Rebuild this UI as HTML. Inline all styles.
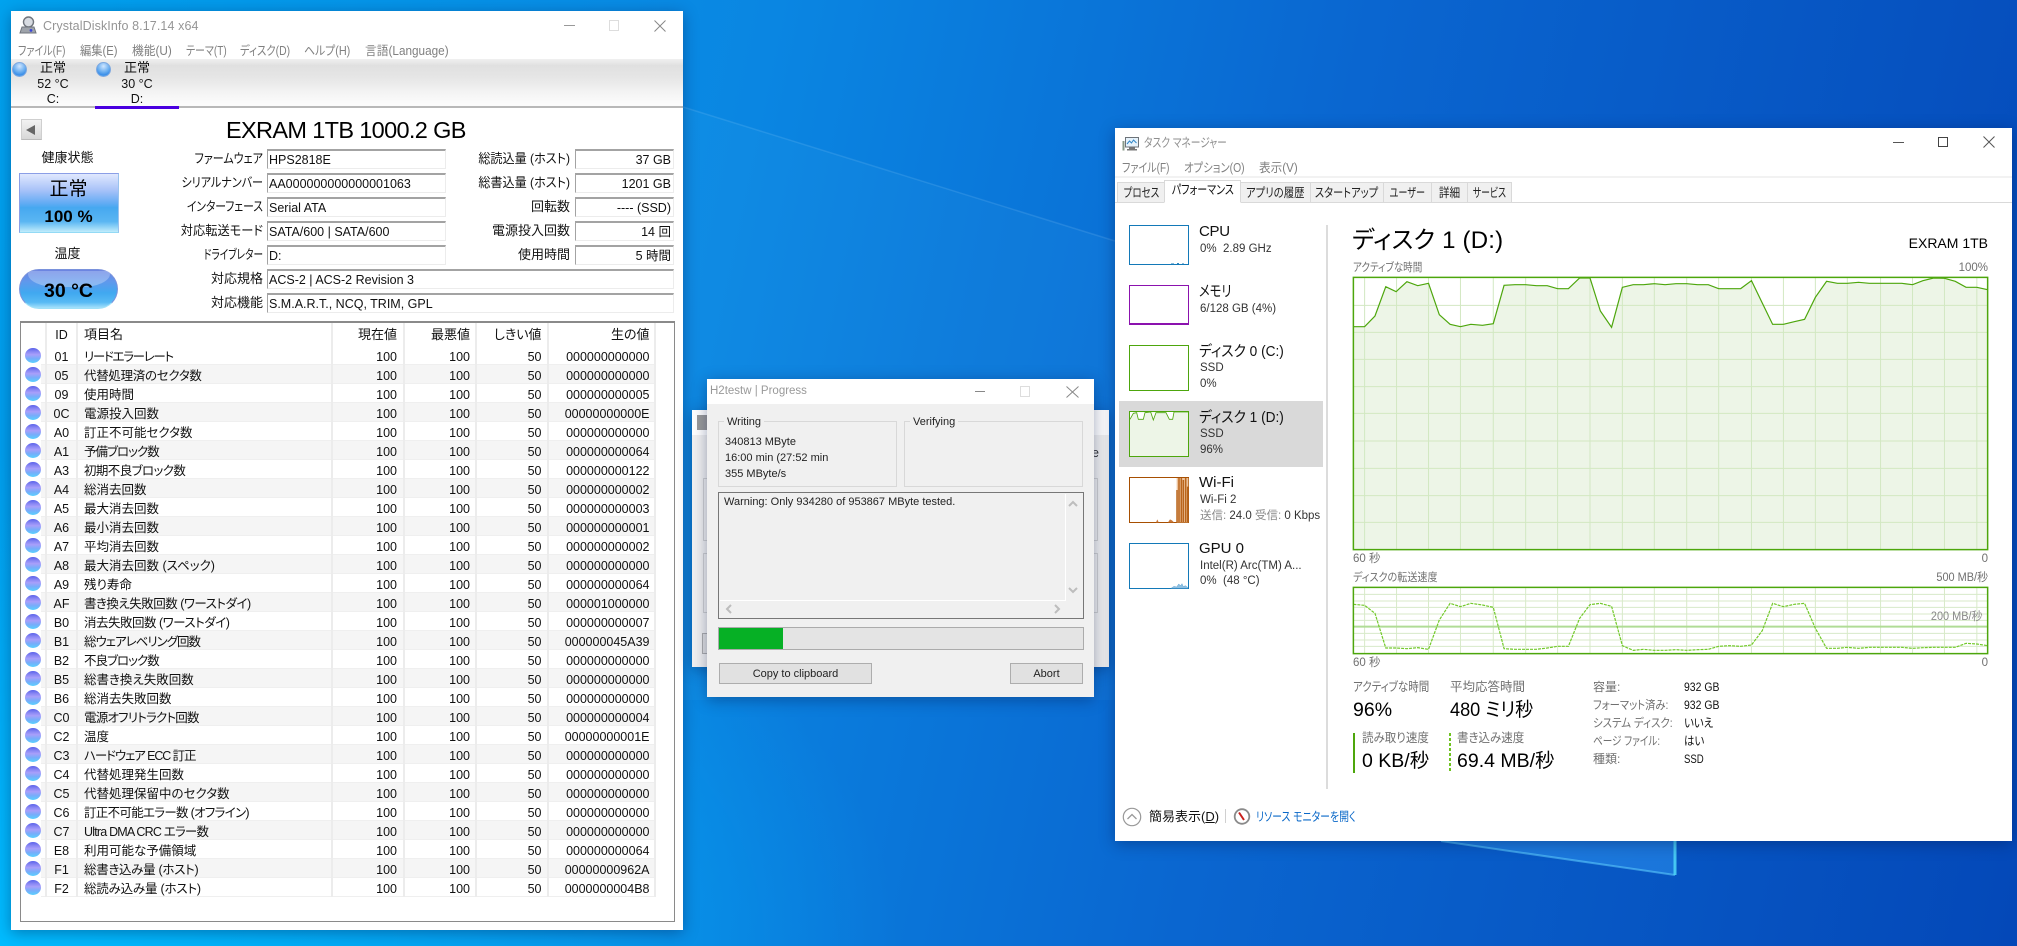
<!DOCTYPE html>
<html lang="ja"><head><meta charset="utf-8"><title>Disk test</title>
<style>
*{box-sizing:border-box}
html,body{margin:0;padding:0}
body{position:relative;width:2017px;height:946px;overflow:hidden;font-family:"Liberation Sans","Noto Sans CJK JP",sans-serif;font-feature-settings:"palt";font-size:12.5px;color:#111;
background:radial-gradient(ellipse 900px 500px at 0% 100%,#00bcff 0%,rgba(0,180,255,0) 100%),linear-gradient(102deg,#00a2ee 0%,#0a86e2 35%,#0a66d0 62%,#0448b8 100%)}
.a{position:absolute}
.t{position:absolute;white-space:nowrap;line-height:20px;height:20px;transform-origin:0 50%}
.w{position:absolute;background:#fff;box-shadow:0 3px 14px rgba(0,20,70,.38)}
.g{color:#707070}
.m{color:#808080}
.ra{text-align:right;transform-origin:100% 50%}
.f{position:absolute;height:20px;background:#fff;border-top:2px solid #a3a3a3;border-left:1px solid #a3a3a3;border-right:1px solid #ececec;border-bottom:1px solid #ececec;line-height:18px;padding-left:1px;white-space:nowrap;font-size:12.5px;color:#111}
.f.x{text-align:right;padding:0 2px 0 0}
.l{position:absolute;text-align:right;white-space:nowrap;line-height:20px;height:20px;font-size:13px;transform-origin:100% 50%}
.rows{position:absolute;left:0;top:346px;width:700px}
.r{position:relative;height:19px;line-height:22px;font-size:12.5px;color:#111}
.r:nth-child(even)::before{content:"";position:absolute;left:41px;width:614px;top:0;height:19px;background:#f5f5f5}
.r::after{content:"";position:absolute;left:41px;width:614px;bottom:0;height:1px;background:#efefef}
.r span{position:absolute;top:0;white-space:nowrap}
.r span:nth-child(1){left:25px;top:2px;width:16px;height:15px;border-radius:50%;background:linear-gradient(180deg,#5a62ea 0%,#8a88f4 25%,#a8a0fa 45%,#78acfa 70%,#58d0ff 100%)}
.r span:nth-child(2){left:46px;width:31px;text-align:center}
.r span:nth-child(3){left:84px}
.r span:nth-child(4){left:331px;width:66px;text-align:right}
.r span:nth-child(5){left:403px;width:67px;text-align:right}
.r span:nth-child(6){left:475px;width:66.5px;text-align:right}
.r span:nth-child(7){left:547px;width:102.5px;text-align:right}
.v{position:absolute;top:323px;height:574px;width:2px;background:#ececec}
.tab{position:absolute;top:182px;height:21px;background:#f0f0f0;border:1px solid #d9d9d9;display:flex;justify-content:center;line-height:20px;font-size:12.5px;color:#222;white-space:nowrap}
.tab span{display:inline-block;flex:none}
.th{position:absolute;left:1129px;width:60px;background:#fff;border:1.5px solid}
.h{font-size:15px}
.s{font-size:11.5px;color:#333}
</style></head><body>

<!-- wallpaper beams -->
<svg class="a" style="left:0;top:0" width="2017" height="946" viewBox="0 0 2017 946">
<polygon points="683,107 1115,241 1115,700 683,700" fill="#7fd0ff" opacity=".05"/>
<polyline points="683,107 1115,241" fill="none" stroke="#b8e6ff" stroke-width="1.500" opacity=".14"/>
<polygon points="1441,841 1675,841 1675,875" fill="#3aa8ff" opacity=".4"/>
<polyline points="1441,841 1675,875" fill="none" stroke="#62d2ff" stroke-width="2" opacity=".55"/>
<polyline points="1675,841 1675,875" fill="none" stroke="#4fd8f8" stroke-width="3" opacity=".85"/>
</svg>

<!-- CrystalDiskInfo -->
<div class="w" style="left:11px;top:11px;width:672px;height:919px"></div>
<svg class="a" style="left:19px;top:16px" width="18" height="18" viewBox="0 0 18 18"><ellipse cx="9.5" cy="6" rx="5" ry="5" fill="#d8dce2" stroke="#70757d" stroke-width="1.4"/><path d="M3 11L15 11 17 17H1Z" fill="#9ea3aa" stroke="#70757d"/><circle cx="12" cy="14.4" r="1.4" fill="#3a46d8"/></svg>
<div class="t" style="left:43px;top:16px;font-size:12.5px;color:#959595;width:150px;letter-spacing:.1px">CrystalDiskInfo 8.17.14 x64</div>
<div class="a" style="left:564px;top:25px;width:11px;height:1px;background:#999"></div>
<div class="a" style="left:609px;top:20px;width:10px;height:11px;border:1px solid #ddd"></div>
<svg class="a" style="left:654px;top:20px" width="12" height="12"><path d="M.5.5L11.5 11.500M11.500.5L.5 11.500" stroke="#888" fill="none"/></svg>
<div class="t m" style="left:18px;top:41px;transform:scaleX(.8)">ファイル(F)</div>
<div class="t m" style="left:80px;top:41px;transform:scaleX(.9)">編集(E)</div>
<div class="t m" style="left:132px;top:41px;transform:scaleX(.94)">機能(U)</div>
<div class="t m" style="left:186px;top:41px;transform:scaleX(.8)">テーマ(T)</div>
<div class="t m" style="left:240px;top:41px;transform:scaleX(.83)">ディスク(D)</div>
<div class="t m" style="left:304px;top:41px;transform:scaleX(.87)">ヘルプ(H)</div>
<div class="t m" style="left:365px;top:41px;transform:scaleX(.94)">言語(Language)</div>
<div class="a" style="left:11px;top:59px;width:672px;height:49px;background:linear-gradient(180deg,#f0f0f0 0%,#e0e0e0 14%,#e6e6e6 40%,#f5f5f5 75%,#fbfbfb 96%);border-bottom:2px solid #b8b8b8"></div>
<div class="a" style="left:95px;top:106px;width:84px;height:3px;background:#4a00e0"></div>
<div class="a" style="left:12px;top:62px;width:15px;height:15px;border-radius:50%;background:radial-gradient(circle at 50% 25%,#d0e6ff 0%,#6aaef0 50%,#3a8ee8 75%,#8fd8ff 100%);border:1px solid #7ea8e0"></div>
<div class="a" style="left:96px;top:62px;width:15px;height:15px;border-radius:50%;background:radial-gradient(circle at 50% 25%,#d0e6ff 0%,#6aaef0 50%,#3a8ee8 75%,#8fd8ff 100%);border:1px solid #7ea8e0"></div>
<div class="t" style="left:28px;top:58px;width:50px;text-align:center;font-size:13px">正常</div>
<div class="t" style="left:28px;top:74px;width:50px;text-align:center;font-size:12.5px">52 °C</div>
<div class="t" style="left:28px;top:89px;width:50px;text-align:center;font-size:12.5px">C:</div>
<div class="t" style="left:112px;top:58px;width:50px;text-align:center;font-size:13px">正常</div>
<div class="t" style="left:112px;top:74px;width:50px;text-align:center;font-size:12.5px">30 °C</div>
<div class="t" style="left:112px;top:89px;width:50px;text-align:center;font-size:12.5px">D:</div>

<div class="a" style="left:21px;top:119px;width:21px;height:21px;background:linear-gradient(180deg,#f2f2f2,#d8d8d8);border:1px solid #cfcfcf;border-bottom-color:#bbb"></div>
<div class="a" style="left:26px;top:125px;width:0;height:0;border-top:5px solid transparent;border-bottom:5px solid transparent;border-right:9px solid #666"></div>
<div class="t" style="left:226px;top:115px;height:30px;line-height:30px;font-size:23.5px;color:#000;letter-spacing:-.65px">EXRAM 1TB 1000.2 GB</div>

<div class="t" style="left:19px;top:148px;width:97px;text-align:center;font-size:13px">健康状態</div>
<div class="a" style="left:19px;top:173px;width:100px;height:60px;border:1px solid #8b9ee6;border-bottom-color:#93daf5;border-right-color:#9ac2ee;background:linear-gradient(180deg,#e0e8fe 0%,#a8c2f8 28%,#64acf4 50%,#46a8f0 58%,#5ab6f2 82%,#c0ecfb 100%)"></div>
<div class="t" style="left:20px;top:180px;width:97px;text-align:center;font-size:19px;color:#000">正常</div>
<div class="t" style="left:19px;top:207px;width:99px;text-align:center;font-size:17px;font-weight:bold;color:#000">100 %</div>
<div class="t" style="left:19px;top:244px;width:97px;text-align:center;font-size:13px">温度</div>
<div class="a" style="left:19px;top:269px;width:99px;height:40px;border-radius:20px;background:linear-gradient(180deg,#6d84e0 0%,#6098ec 30%,#40a8f0 60%,#58baf4 85%,#a6e2fb 100%);border:1px solid #7a92dc;border-bottom-color:#a0e0f8"></div>
<div class="a" style="left:28px;top:271px;width:82px;height:16px;border-radius:4px 4px 30px 30px/3px 3px 14px 14px;background:linear-gradient(180deg,#a8bcf2,#b6d6f8);opacity:.55"></div>
<div class="t" style="left:19px;top:281px;width:99px;text-align:center;font-size:19.5px;font-weight:bold;color:#000">30 °C</div>

<div class="l" style="left:143px;width:120px;top:149px;transform:scaleX(.85)">ファームウェア</div>
<div class="l" style="left:143px;width:120px;top:173px;transform:scaleX(.85)">シリアルナンバー</div>
<div class="l" style="left:143px;width:120px;top:197px;transform:scaleX(.83)">インターフェース</div>
<div class="l" style="left:143px;width:120px;top:221px;transform:scaleX(.94)">対応転送モード</div>
<div class="l" style="left:143px;width:120px;top:245px;transform:scaleX(.74)">ドライブレター</div>
<div class="l" style="left:143px;width:120px;top:269px">対応規格</div>
<div class="l" style="left:143px;width:120px;top:293px">対応機能</div>
<div class="f" style="left:267px;top:149px;width:179px">HPS2818E</div>
<div class="f" style="left:267px;top:173px;width:179px">AA000000000000001063</div>
<div class="f" style="left:267px;top:197px;width:179px">Serial ATA</div>
<div class="f" style="left:267px;top:221px;width:179px">SATA/600 | SATA/600</div>
<div class="f" style="left:267px;top:245px;width:179px">D:</div>
<div class="f" style="left:267px;top:269px;width:407px">ACS-2 | ACS-2 Revision 3</div>
<div class="f" style="left:267px;top:293px;width:407px">S.M.A.R.T., NCQ, TRIM, GPL</div>
<div class="l" style="left:450px;width:120px;top:149px;transform:scaleX(.93)">総読込量 (ホスト)</div>
<div class="l" style="left:450px;width:120px;top:173px;transform:scaleX(.93)">総書込量 (ホスト)</div>
<div class="l" style="left:450px;width:120px;top:197px">回転数</div>
<div class="l" style="left:450px;width:120px;top:221px">電源投入回数</div>
<div class="l" style="left:450px;width:120px;top:245px">使用時間</div>
<div class="f x" style="left:575px;top:149px;width:99px">37 GB</div>
<div class="f x" style="left:575px;top:173px;width:99px">1201 GB</div>
<div class="f x" style="left:575px;top:197px;width:99px">---- (SSD)</div>
<div class="f x" style="left:575px;top:221px;width:99px">14 回</div>
<div class="f x" style="left:575px;top:245px;width:99px">5 時間</div>

<div class="a" style="left:20px;top:321px;width:655px;height:601px;background:#fff;border:1px solid #8a8a8a;border-top-width:2px"></div>
<div class="t" style="left:46px;top:325px;width:31px;text-align:center">ID</div>
<div class="t" style="left:84px;top:325px;font-size:13px">項目名</div>
<div class="t ra" style="left:331px;top:325px;width:66px;font-size:13px">現在値</div>
<div class="t ra" style="left:403px;top:325px;width:67px;font-size:13px">最悪値</div>
<div class="t ra" style="left:475px;top:325px;width:66.500px;font-size:13px">しきい値</div>
<div class="t ra" style="left:547px;top:325px;width:102.500px;font-size:13px">生の値</div>

<div class="rows">
<div class="r"><span></span><span>01</span><span style="letter-spacing:-1.3px">リードエラーレート</span><span>100</span><span>100</span><span>50</span><span>000000000000</span></div>
<div class="r"><span></span><span>05</span><span style="letter-spacing:-.3px">代替処理済のセクタ数</span><span>100</span><span>100</span><span>50</span><span>000000000000</span></div>
<div class="r"><span></span><span>09</span><span>使用時間</span><span>100</span><span>100</span><span>50</span><span>000000000005</span></div>
<div class="r"><span></span><span>0C</span><span>電源投入回数</span><span>100</span><span>100</span><span>50</span><span>00000000000E</span></div>
<div class="r"><span></span><span>A0</span><span>訂正不可能セクタ数</span><span>100</span><span>100</span><span>50</span><span>000000000000</span></div>
<div class="r"><span></span><span>A1</span><span style="letter-spacing:-1px">予備ブロック数</span><span>100</span><span>100</span><span>50</span><span>000000000064</span></div>
<div class="r"><span></span><span>A3</span><span style="letter-spacing:-.6px">初期不良ブロック数</span><span>100</span><span>100</span><span>50</span><span>000000000122</span></div>
<div class="r"><span></span><span>A4</span><span>総消去回数</span><span>100</span><span>100</span><span>50</span><span>000000000002</span></div>
<div class="r"><span></span><span>A5</span><span>最大消去回数</span><span>100</span><span>100</span><span>50</span><span>000000000003</span></div>
<div class="r"><span></span><span>A6</span><span>最小消去回数</span><span>100</span><span>100</span><span>50</span><span>000000000001</span></div>
<div class="r"><span></span><span>A7</span><span>平均消去回数</span><span>100</span><span>100</span><span>50</span><span>000000000002</span></div>
<div class="r"><span></span><span>A8</span><span>最大消去回数 (スペック)</span><span>100</span><span>100</span><span>50</span><span>000000000000</span></div>
<div class="r"><span></span><span>A9</span><span>残り寿命</span><span>100</span><span>100</span><span>50</span><span>000000000064</span></div>
<div class="r"><span></span><span>AF</span><span style="letter-spacing:-.5px">書き換え失敗回数 (ワーストダイ)</span><span>100</span><span>100</span><span>50</span><span>000001000000</span></div>
<div class="r"><span></span><span>B0</span><span style="letter-spacing:-.5px">消去失敗回数 (ワーストダイ)</span><span>100</span><span>100</span><span>50</span><span>000000000007</span></div>
<div class="r"><span></span><span>B1</span><span style="letter-spacing:-1px">総ウェアレベリング回数</span><span>100</span><span>100</span><span>50</span><span>000000045A39</span></div>
<div class="r"><span></span><span>B2</span><span style="letter-spacing:-1px">不良ブロック数</span><span>100</span><span>100</span><span>50</span><span>000000000000</span></div>
<div class="r"><span></span><span>B5</span><span>総書き換え失敗回数</span><span>100</span><span>100</span><span>50</span><span>000000000000</span></div>
<div class="r"><span></span><span>B6</span><span>総消去失敗回数</span><span>100</span><span>100</span><span>50</span><span>000000000000</span></div>
<div class="r"><span></span><span>C0</span><span style="letter-spacing:-.8px">電源オフリトラクト回数</span><span>100</span><span>100</span><span>50</span><span>000000000004</span></div>
<div class="r"><span></span><span>C2</span><span>温度</span><span>100</span><span>100</span><span>50</span><span>00000000001E</span></div>
<div class="r"><span></span><span>C3</span><span style="letter-spacing:-1.1px">ハードウェア ECC 訂正</span><span>100</span><span>100</span><span>50</span><span>000000000000</span></div>
<div class="r"><span></span><span>C4</span><span>代替処理発生回数</span><span>100</span><span>100</span><span>50</span><span>000000000000</span></div>
<div class="r"><span></span><span>C5</span><span>代替処理保留中のセクタ数</span><span>100</span><span>100</span><span>50</span><span>000000000000</span></div>
<div class="r"><span></span><span>C6</span><span style="letter-spacing:-.7px">訂正不可能エラー数 (オフライン)</span><span>100</span><span>100</span><span>50</span><span>000000000000</span></div>
<div class="r"><span></span><span>C7</span><span style="letter-spacing:-.8px">Ultra DMA CRC エラー数</span><span>100</span><span>100</span><span>50</span><span>000000000000</span></div>
<div class="r"><span></span><span>E8</span><span>利用可能な予備領域</span><span>100</span><span>100</span><span>50</span><span>000000000064</span></div>
<div class="r"><span></span><span>F1</span><span style="letter-spacing:-.3px">総書き込み量 (ホスト)</span><span>100</span><span>100</span><span>50</span><span>00000000962A</span></div>
<div class="r"><span></span><span>F2</span><span style="letter-spacing:-.2px">総読み込み量 (ホスト)</span><span>100</span><span>100</span><span>50</span><span>0000000004B8</span></div>
</div>
<div class="v" style="left:45px"></div><div class="v" style="left:76px"></div><div class="v" style="left:331px"></div><div class="v" style="left:403px"></div><div class="v" style="left:475px"></div><div class="v" style="left:547px"></div><div class="v" style="left:654px"></div>

<!-- H2testw back window -->
<div class="w" style="left:692px;top:410px;width:417px;height:257px;background:#f0f0f0"></div>
<div class="a" style="left:692px;top:410px;width:417px;height:25px;background:#fff"></div>
<div class="a" style="left:697px;top:415px;width:10px;height:15px;background:#9a9a9a"></div>
<div class="a" style="left:703px;top:478px;width:395px;height:63px;border:1px solid #d0d0d0"></div>
<div class="a" style="left:703px;top:553px;width:395px;height:60px;border:1px solid #d0d0d0"></div>
<div class="a" style="left:702px;top:633px;width:20px;height:21px;background:#e1e1e1;border:1px solid #adadad"></div>
<div class="t" style="left:1092px;top:443px;color:#333">e</div>

<!-- H2testw progress -->
<div class="w" style="left:707px;top:379px;width:387px;height:318px;background:#f0f0f0"></div>
<div class="a" style="left:707px;top:379px;width:387px;height:25px;background:#fff"></div>
<div class="t" style="left:710px;top:381px;font-size:11.500px;color:#999">H2testw | Progress</div>
<div class="a" style="left:975px;top:391px;width:10px;height:1px;background:#888"></div>
<div class="a" style="left:1020px;top:386px;width:10px;height:11px;border:1px solid #ddd"></div>
<svg class="a" style="left:1066px;top:386px" width="13" height="12"><path d="M.5.5L12.500 11.500M12.500.5L.5 11.500" stroke="#888" fill="none"/></svg>
<div class="a" style="left:718px;top:421px;width:179px;height:66px;border:1.5px solid #d8d8d8"></div>
<div class="a" style="left:904px;top:421px;width:179px;height:66px;border:1.5px solid #d8d8d8"></div>
<div class="t" style="left:724px;top:412px;font-size:11px;background:#f0f0f0;padding:0 3px;color:#222">Writing</div>
<div class="t" style="left:910px;top:412px;font-size:11px;background:#f0f0f0;padding:0 3px;color:#222">Verifying</div>
<div class="t" style="left:725px;top:432px;font-size:11px;color:#222">340813 MByte</div>
<div class="t" style="left:725px;top:448px;font-size:11px;color:#222">16:00 min (27:52 min</div>
<div class="t" style="left:725px;top:464px;font-size:11px;color:#222">355 MByte/s</div>
<div class="a" style="left:718px;top:492px;width:366px;height:127px;border:1.5px solid #777"></div>
<div class="a" style="left:1065px;top:494px;width:1px;height:107px;background:#fff"></div>
<div class="a" style="left:720px;top:600px;width:346px;height:1px;background:#fff"></div>
<div class="t" style="left:724px;top:492px;font-size:11px;color:#222">Warning: Only 934280 of 953867 MByte tested.</div>
<svg class="a" style="left:718px;top:492px" width="366" height="127" fill="none" stroke="#bdbdbd" stroke-width="2"><path d="M351 14l4-4 4 4M351 96l4 4 4-4M13 113l-4 4 4 4M337 113l4 4-4 4"/></svg>
<div class="a" style="left:718px;top:627px;width:366px;height:23px;background:#e4e4e4;border:1px solid #ababab"></div>
<div class="a" style="left:719px;top:628px;width:64px;height:21px;background:#06b025"></div>
<div class="a" style="left:719px;top:663px;width:153px;height:21px;background:#e1e1e1;border:1px solid #adadad;text-align:center;line-height:20px;font-size:11px;color:#222">Copy to clipboard</div>
<div class="a" style="left:1010px;top:663px;width:73px;height:21px;background:#e1e1e1;border:1px solid #adadad;text-align:center;line-height:20px;font-size:11px;color:#222">Abort</div>

<!-- Task Manager -->
<div class="w" style="left:1115px;top:128px;width:897px;height:713px"></div>
<svg class="a" style="left:1122px;top:136px" width="18" height="16" viewBox="0 0 18 16"><rect x="3.500" y="1.500" width="13" height="9.500" fill="#e6f2fb" stroke="#6d7379"/><path d="M5 8l2.500-3 2 2 2-3 3 3" fill="none" stroke="#2f86c8"/><rect x="7" y="11.500" width="6" height="1.500" fill="#777"/><rect x="5" y="13" width="10" height="1.500" fill="#777"/><rect x=".5" y="5" width="2" height="9.500" fill="#8a9a8a"/></svg>
<div class="t" style="left:1144px;top:133px;color:#8f8f8f;font-size:12.500px;transform:scaleX(.78)">タスク マネージャー</div>
<div class="a" style="left:1893px;top:142px;width:11px;height:1px;background:#555"></div>
<div class="a" style="left:1938px;top:137px;width:10px;height:10px;border:1px solid #444"></div>
<svg class="a" style="left:1983px;top:136px" width="12" height="12"><path d="M.5.5L11.500 11.500M11.500.5L.5 11.500" stroke="#555" fill="none"/></svg>
<div class="t m" style="left:1122px;top:158px;font-size:12.500px;transform:scaleX(.8)">ファイル(F)</div>
<div class="t m" style="left:1184px;top:158px;font-size:12.500px;transform:scaleX(.83)">オプション(O)</div>
<div class="t m" style="left:1259px;top:158px;font-size:12.500px;transform:scaleX(.93)">表示(V)</div>
<div class="a" style="left:1115px;top:176px;width:897px;height:2px;background:#f2f2f2"></div>
<div class="a" style="left:1115px;top:202px;width:897px;height:1px;background:#d9d9d9"></div>
<div class="tab" style="left:1117px;width:48px"><span style="transform:scaleX(.76)">プロセス</span></div>
<div class="tab" style="left:1240px;width:71px"><span style="transform:scaleX(.83)">アプリの履歴</span></div>
<div class="tab" style="left:1310px;width:74px"><span style="transform:scaleX(.82)">スタートアップ</span></div>
<div class="tab" style="left:1383px;width:49px"><span style="transform:scaleX(.73)">ユーザー</span></div>
<div class="tab" style="left:1431px;width:37px"><span style="transform:scaleX(.85)">詳細</span></div>
<div class="tab" style="left:1467px;width:45px"><span style="transform:scaleX(.71)">サービス</span></div>
<div class="tab" style="left:1164px;top:180px;width:77px;height:23px;background:#fff;border-bottom-color:#fff;line-height:18px;color:#111"><span style="transform:scaleX(.8)">パフォーマンス</span></div>

<div class="a" style="left:1119px;top:401px;width:204px;height:66px;background:#d9d9d9"></div>
<div class="a" style="left:1326px;top:225px;width:1.500px;height:564px;background:#dcdcdc"></div>
<div class="th" style="top:225px;height:40px;border-color:#1379b8"></div>
<div class="th" style="top:285px;height:40px;border-color:#8b12ae;border-bottom-width:2.500px"></div>
<div class="th" style="top:345px;height:46px;border-color:#4da60c"></div>
<div class="th" style="top:411px;height:46px;border-color:#4da60c;background:#edf5e7"></div>
<div class="th" style="top:477px;height:46px;border-color:#a74f01"></div>
<div class="th" style="top:543px;height:46px;border-color:#1379b8"></div>
<svg class="a" style="left:1110px;top:120px" width="460" height="150" viewBox="0 0 1380 450"><path d="M183 432h9M201 431h6M216 432h6" stroke="#1379b8" stroke-width="3" fill="none"/></svg>
<svg class="a" style="left:1110px;top:400px" width="460" height="200" viewBox="0 0 1380 600">
<path d="M60 36H70L60 60ZM70 38 80 36 85 58 100 58 105 36 122 36 130 60 138 38ZM168 36 178 58 188 58 192 36Z" fill="#fff"/>
<path d="M60 58L70 40 80 38 85 58 100 58 105 38 122 36 130 60 138 38 168 38 178 58 188 58 192 36H236" stroke="#4da60c" stroke-width="2.500" fill="none"/>
<rect x="200" y="234" width="35" height="133" fill="#ecc29b"/>
<path d="M201 366V270M207 366V234M214 366V234M220 366V240M227 366V234M233 366V260" stroke="#b9651c" stroke-width="4.500" fill="none"/>
<path d="M138 367l4-9 4 9zM174 367l6-9 6 3 6 6z" fill="#c97a3d"/>
<path d="M184 564l8-5 8 2 6-9 6 5 4-6 4 9 6-3 8 6v2h-50z" fill="#8fc0e2" stroke="#3a8cc5"/>
</svg>
<div class="t h" style="left:1199px;top:222px;letter-spacing:-.3px">CPU</div>
<div class="t s" style="left:1200px;top:239px">0%&nbsp; 2.89 GHz</div>
<div class="t h" style="left:1199px;top:282px;transform:scaleX(.82)">メモリ</div>
<div class="t s" style="left:1200px;top:299px">6/128 GB (4%)</div>
<div class="t h" style="left:1199px;top:342px;transform:scaleX(.91)">ディスク 0 (C:)</div>
<div class="t s" style="left:1200px;top:358px">SSD</div>
<div class="t s" style="left:1200px;top:374px">0%</div>
<div class="t h" style="left:1199px;top:408px;transform:scaleX(.91)">ディスク 1 (D:)</div>
<div class="t s" style="left:1200px;top:424px">SSD</div>
<div class="t s" style="left:1200px;top:440px">96%</div>
<div class="t h" style="left:1199px;top:473px">Wi-Fi</div>
<div class="t s" style="left:1200px;top:490px">Wi-Fi 2</div>
<div class="t s" style="left:1200px;top:506px"><span style="color:#8a8a8a">送信:</span> 24.0 <span style="color:#8a8a8a">受信:</span> 0 Kbps</div>
<div class="t h" style="left:1199px;top:539px">GPU 0</div>
<div class="t s" style="left:1200px;top:556px">Intel(R) Arc(TM) A...</div>
<div class="t s" style="left:1200px;top:571px">0%&nbsp; (48 °C)</div>

<div class="t" style="left:1352px;top:226px;height:30px;line-height:30px;font-size:24px;color:#000;letter-spacing:.2px">ディスク 1 (D:)</div>
<div class="t ra" style="left:1850px;top:233px;width:138px;font-size:14px;color:#000">EXRAM 1TB</div>
<div class="t g" style="left:1353px;top:258px;font-size:11.500px;transform:scaleX(.83)">アクティブな時間</div>
<div class="t g ra" style="left:1900px;top:258px;width:88px;font-size:11.500px">100%</div>

<svg class="a" style="left:1340px;top:210px" width="677" height="370" viewBox="0 0 1568 1110" preserveAspectRatio="none">
<rect x="31" y="202" width="1469" height="817" fill="#fff"/>
<polygon fill="#edf5e7" points="31,350 57,350 81,318 106,230 130,245 155,215 180,227 205,220 230,314 255,343 279,350 303,343 330,346 355,341 380,226 405,224 430,224 455,227 480,227 504,236 529,236 555,204 579,204 603,303 629,352 654,232 679,224 703,224 728,221 753,224 778,221 803,221 828,224 853,224 877,236 903,236 928,236 953,212 978,279 1002,343 1027,343 1052,335 1076,328 1101,262 1127,214 1152,220 1175,220 1201,217 1226,220 1252,220 1277,220 1301,220 1326,224 1350,212 1375,204 1400,205 1425,214 1450,232 1475,232 1500,239 1500,1019 31,1019"/>
<path vector-effect="non-scaling-stroke" stroke="#d2e8c2" stroke-width="1" fill="none" d="M57 202V1019M131 202V1019M205 202V1019M279 202V1019M355 202V1019M430 202V1019M504 202V1019M579 202V1019M654 202V1019M728 202V1019M803 202V1019M877 202V1019M953 202V1019M1027 202V1019M1101 202V1019M1175 202V1019M1252 202V1019M1326 202V1019M1400 202V1019M1475 202V1019M31 286H1500M31 367H1500M31 448H1500M31 530H1500M31 610H1500M31 693H1500M31 775H1500M31 857H1500M31 937H1500"/>
<polyline vector-effect="non-scaling-stroke" stroke="#4da60c" stroke-width="1.200" fill="none" points="31,350 57,350 81,318 106,230 130,245 155,215 180,227 205,220 230,314 255,343 279,350 303,343 330,346 355,341 380,226 405,224 430,224 455,227 480,227 504,236 529,236 555,204 579,204 603,303 629,352 654,232 679,224 703,224 728,221 753,224 778,221 803,221 828,224 853,224 877,236 903,236 928,236 953,212 978,279 1002,343 1027,343 1052,335 1076,328 1101,262 1127,214 1152,220 1175,220 1201,217 1226,220 1252,220 1277,220 1301,220 1326,224 1350,212 1375,204 1400,205 1425,214 1450,232 1475,232 1500,239"/>
<rect vector-effect="non-scaling-stroke" x="31" y="202" width="1469" height="817" fill="none" stroke="#4da60c" stroke-width="1.500"/>
</svg>
<div class="t g" style="left:1353px;top:549px;font-size:11.500px">60 秒</div>
<div class="t g ra" style="left:1900px;top:549px;width:88px;font-size:11.500px">0</div>
<div class="t g" style="left:1353px;top:568px;font-size:11.500px;transform:scaleX(.875)">ディスクの転送速度</div>
<div class="t g ra" style="left:1880px;top:568px;width:108px;font-size:11.500px;transform:scaleX(.95)">500 MB/秒</div>

<svg class="a" style="left:1340px;top:560px" width="677" height="300" viewBox="0 0 1568 900" preserveAspectRatio="none">
<rect x="31" y="82" width="1469" height="199" fill="#fff"/>
<path vector-effect="non-scaling-stroke" stroke="#d8eac9" stroke-width="1" fill="none" d="M57 82V281M131 82V281M205 82V281M279 82V281M355 82V281M430 82V281M504 82V281M579 82V281M654 82V281M728 82V281M803 82V281M877 82V281M953 82V281M1027 82V281M1101 82V281M1175 82V281M1252 82V281M1326 82V281M1400 82V281M1475 82V281M31 103H1500M31 123H1500M31 142H1500M31 162H1500M31 181H1500M31 220H1500M31 240H1500M31 259H1500"/>
<path vector-effect="non-scaling-stroke" stroke="#b0dc96" stroke-width="2" fill="none" d="M31 200H1500"/>
<polyline vector-effect="non-scaling-stroke" stroke="#72c92a" stroke-width="1.200" stroke-dasharray="3 1" fill="none" points="31,133 57,136 81,160 106,264 130,264 155,266 180,263 205,268 230,180 255,130 279,140 303,130 330,135 355,142 380,266 405,268 430,268 455,268 480,264 504,259 529,259 555,175 579,134 603,130 629,139 654,257 679,271 703,268 728,271 753,271 778,269 803,271 828,269 853,268 877,259 903,257 928,259 953,255 978,212 1002,130 1027,140 1052,133 1076,130 1101,205 1127,265 1152,265 1175,262 1201,265 1226,262 1252,262 1277,262 1301,262 1326,265 1350,263 1375,262 1400,262 1425,262 1450,250 1475,252 1500,257"/>
<rect vector-effect="non-scaling-stroke" x="31" y="82" width="1469" height="199" fill="none" stroke="#4da60c" stroke-width="1.500"/>
</svg>
<div class="t ra" style="left:1880px;top:607px;width:102.500px;font-size:11.500px;color:#888;transform:scaleX(.95)">200 MB/秒</div>
<div class="t g" style="left:1353px;top:653px;font-size:11.500px">60 秒</div>
<div class="t g ra" style="left:1900px;top:653px;width:88px;font-size:11.500px">0</div>

<div class="t g" style="left:1353px;top:677px;font-size:12.500px;transform:scaleX(.84)">アクティブな時間</div>
<div class="t g" style="left:1450px;top:677px;font-size:12.500px">平均応答時間</div>
<div class="t" style="left:1353px;top:700px;font-size:19.500px;color:#000">96%</div>
<div class="t" style="left:1450px;top:700px;font-size:19.500px;color:#000;transform:scaleX(.93)">480 ミリ秒</div>
<div class="a" style="left:1353px;top:733px;width:2px;height:40px;background:#4da60c"></div>
<div class="a" style="left:1449px;top:733px;width:2px;height:40px;background:repeating-linear-gradient(180deg,#6fc320 0 3px,transparent 3px 5px)"></div>
<div class="t g" style="left:1362px;top:728px;font-size:12.500px;transform:scaleX(.92)">読み取り速度</div>
<div class="t g" style="left:1457px;top:728px;font-size:12.500px;transform:scaleX(.92)">書き込み速度</div>
<div class="t" style="left:1362px;top:751px;font-size:19.500px;color:#000">0 KB/秒</div>
<div class="t" style="left:1457px;top:751px;font-size:19.500px;color:#000">69.4 MB/秒</div>

<div class="t g" style="left:1593px;top:677px;font-size:12px">容量:</div>
<div class="t g" style="left:1593px;top:695px;font-size:12px;transform:scaleX(.86)">フォーマット済み:</div>
<div class="t g" style="left:1593px;top:713px;font-size:12px;transform:scaleX(.87)">システム ディスク:</div>
<div class="t g" style="left:1593px;top:731px;font-size:12px;transform:scaleX(.8)">ページ ファイル:</div>
<div class="t g" style="left:1593px;top:749px;font-size:12px">種類:</div>
<div class="t" style="left:1684px;top:677px;font-size:12px;transform:scaleX(.87)">932 GB</div>
<div class="t" style="left:1684px;top:695px;font-size:12px;transform:scaleX(.87)">932 GB</div>
<div class="t" style="left:1684px;top:713px;font-size:12px;transform:scaleX(.87)">いいえ</div>
<div class="t" style="left:1684px;top:731px;font-size:12px;transform:scaleX(.87)">はい</div>
<div class="t" style="left:1684px;top:749px;font-size:12px;transform:scaleX(.8)">SSD</div>

<svg class="a" style="left:1122px;top:807px" width="20" height="20"><circle cx="10" cy="10" r="8.700" fill="#fff" stroke="#999" stroke-width="1.200"/><path d="M5.500 12L10 7.500 14.500 12" fill="none" stroke="#999" stroke-width="1.300"/></svg>
<div class="t" style="left:1149px;top:807px;font-size:13px;color:#111">簡易表示(<span style="text-decoration:underline">D</span>)</div>
<div class="a" style="left:1225px;top:809px;width:1px;height:14px;background:#d0d0d0"></div>
<svg class="a" style="left:1233px;top:808px" width="18" height="17"><circle cx="9" cy="8.500" r="7.300" fill="#fff" stroke="#8a8a8a" stroke-width="1.800"/><path d="M6 4.500L11 12" stroke="#c8201c" stroke-width="2"/></svg>
<div class="t" style="left:1256px;top:807px;font-size:12.500px;color:#0a68c8;transform:scaleX(.79)">リソース モニターを開く</div>
</body></html>
